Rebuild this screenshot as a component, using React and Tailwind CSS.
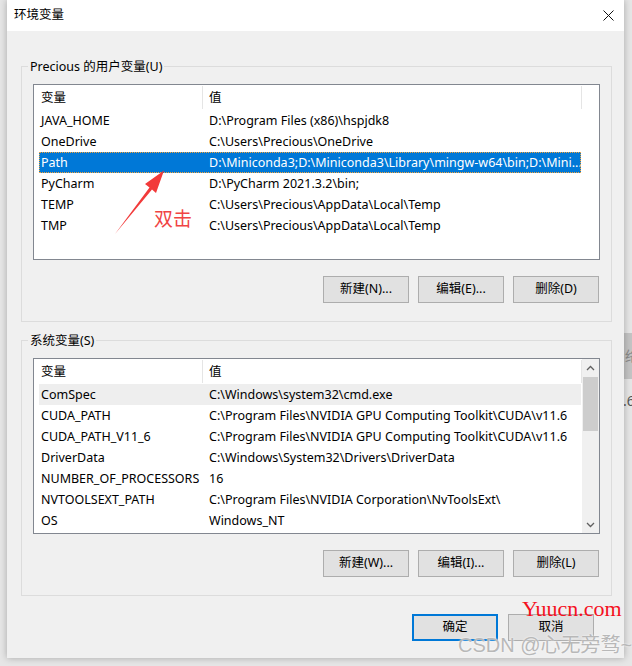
import React from "react";

const USER_VARS = [
  ["JAVA_HOME", "D:\\Program Files (x86)\\hspjdk8"],
  ["OneDrive", "C:\\Users\\Precious\\OneDrive"],
  ["Path", "D:\\Miniconda3;D:\\Miniconda3\\Library\\mingw-w64\\bin;D:\\Mini..."],
  ["PyCharm", "D:\\PyCharm 2021.3.2\\bin;"],
  ["TEMP", "C:\\Users\\Precious\\AppData\\Local\\Temp"],
  ["TMP", "C:\\Users\\Precious\\AppData\\Local\\Temp"],
];

const SYS_VARS = [
  ["ComSpec", "C:\\Windows\\system32\\cmd.exe"],
  ["CUDA_PATH", "C:\\Program Files\\NVIDIA GPU Computing Toolkit\\CUDA\\v11.6"],
  ["CUDA_PATH_V11_6", "C:\\Program Files\\NVIDIA GPU Computing Toolkit\\CUDA\\v11.6"],
  ["DriverData", "C:\\Windows\\System32\\Drivers\\DriverData"],
  ["NUMBER_OF_PROCESSORS", "16"],
  ["NVTOOLSEXT_PATH", "C:\\Program Files\\NVIDIA Corporation\\NvToolsExt\\"],
  ["OS", "Windows_NT"],
];

function Chevron({ down }) {
  return (
    <svg width="9" height="6" viewBox="0 0 9 6">
      <polyline
        points={down ? "1,1 4.5,4.5 8,1" : "1,5 4.5,1.5 8,5"}
        fill="none"
        stroke="#606060"
        strokeWidth="1.3"
      />
    </svg>
  );
}

function ListView({ rows, selected, hover, scroll }) {
  return (
    <div className="h-[176px] border border-[#828790] bg-white flex overflow-hidden">
      <div className="w-[548px] pl-[5px]">
        <div className="flex h-[25px] items-center">
          <div className="w-[164px] h-[23px] border-r border-[#e5e5e5] pl-[2px] pt-[2px] flex items-center">
            变量
          </div>
          <div className="w-[379px] h-[23px] border-r border-[#e5e5e5] pl-[6px] pt-[2px] flex items-center">
            值
          </div>
        </div>
        {rows.map(([name, value], i) => (
          <div
            key={name}
            className={[
              "flex h-[21px] w-[542px] items-center pt-[2px]",
              i === selected
                ? "bg-[#0078d7] text-white outline-1 outline-dotted outline-[#f5a43a] -outline-offset-1"
                : "",
              i === hover ? "bg-[#eeeeee]" : "",
            ].join(" ")}
          >
            <div className="w-[164px] pl-[2px] whitespace-nowrap overflow-hidden">
              {name}
            </div>
            <div className="w-[378px] pl-[6px] whitespace-nowrap overflow-hidden">
              {value}
            </div>
          </div>
        ))}
      </div>
      {scroll ? (
        <div className="w-[17px] bg-[#f0f0f0] flex flex-col">
          <div className="h-[17px] flex items-center justify-center">
            <Chevron />
          </div>
          <div className="mx-[1px] mt-[1px] h-[54px] bg-[#cdcdcd]" />
          <div className="flex-1" />
          <div className="h-[17px] flex items-center justify-center">
            <Chevron down />
          </div>
        </div>
      ) : (
        <div className="w-[17px]" />
      )}
    </div>
  );
}

function Button({ children, primary }) {
  return (
    <div
      className={[
        "w-[86px] h-[27px] flex items-center justify-center bg-[#e1e1e1]",
        primary ? "border-2 border-[#0078d7]" : "border border-[#adadad]",
      ].join(" ")}
    >
      {children}
    </div>
  );
}

function GroupBox({ label, rows, selected, hover, scroll, buttons }) {
  return (
    <div className="relative border border-[#dcdcdc] pt-[17px] px-[11px] pb-[18px]">
      <span className="absolute left-[6px] -top-[8px] px-[2px] bg-[#f0f0f0] leading-[16px]">
        {label}
      </span>
      <ListView rows={rows} selected={selected} hover={hover} scroll={scroll} />
      <div className="mt-[16px] flex justify-end gap-[9px] pr-[1px]">
        {buttons.map((b) => (
          <Button key={b}>{b}</Button>
        ))}
      </div>
    </div>
  );
}

export default function App() {
  return (
    <div className="relative w-[632px] h-[666px] overflow-hidden bg-[#e6e6e6] pl-[7px] text-[12.5px] text-black font-['Noto_Sans','Noto_Sans_CJK_SC',sans-serif]">
      {/* bits of the window behind */}
      <div className="absolute left-[624px] top-[333px] w-[8px] h-[46px] bg-[#c4c4c4] overflow-hidden">
        <span className="absolute left-[1px] top-[12px] text-[14px] text-[#8a8a8a]">络</span>
      </div>
      <span className="absolute left-[623px] top-[390px] text-[14px] text-[#555]">.6</span>

      <div className="relative w-[617px] h-[658px] bg-[#f0f0f0] shadow-[0_0_7px_rgba(0,0,0,0.28)]">
        <div className="h-[31px] bg-white flex items-center justify-between pl-[7px] pr-[10px]">
          <span>环境变量</span>
          <svg width="11" height="11" viewBox="0 0 11 11">
            <path d="M0.5 0.5 L10.5 10.5 M10.5 0.5 L0.5 10.5" stroke="#111" strokeWidth="1" />
          </svg>
        </div>

        <div className="pt-[35px] pl-[14px] pr-[12px]">
          <GroupBox
            label="Precious 的用户变量(U)"
            rows={USER_VARS}
            selected={2}
            buttons={["新建(N)...", "编辑(E)...", "删除(D)"]}
          />
          <div className="mt-[18px]">
            <GroupBox
              label="系统变量(S)"
              rows={SYS_VARS}
              hover={0}
              scroll
              buttons={["新建(W)...", "编辑(I)...", "删除(L)"]}
            />
          </div>
          <div className="mt-[18px] flex justify-end gap-[10px] pr-[18px]">
            <Button primary>确定</Button>
            <Button>取消</Button>
          </div>
        </div>
      </div>

      {/* annotation */}
      <svg className="absolute left-0 top-0" width="632" height="666">
        <polygon
          points="115,234 149.5,187.5 145,184 164,170.5 156,193 152,189.5"
          fill="#f23a3a"
        />
      </svg>
      <span className="absolute left-[154px] top-[204px] text-[19px] text-[#f04444] font-['Noto_Sans_CJK_SC',sans-serif]">
        双击
      </span>

      {/* watermarks */}
      <span className="absolute left-[522px] top-[597px] text-[22px] leading-[24px] text-[#f5101e] font-['Liberation_Serif',serif]">
        Yuucn.com
      </span>
      <span className="absolute left-[458px] top-[633px] text-[20px] leading-[24px] text-[#b8b8b8] [text-shadow:0_0_2px_#fff] font-['Liberation_Sans','Noto_Sans_CJK_SC',sans-serif] whitespace-nowrap">
        CSDN @心无旁骛~
      </span>
    </div>
  );
}
